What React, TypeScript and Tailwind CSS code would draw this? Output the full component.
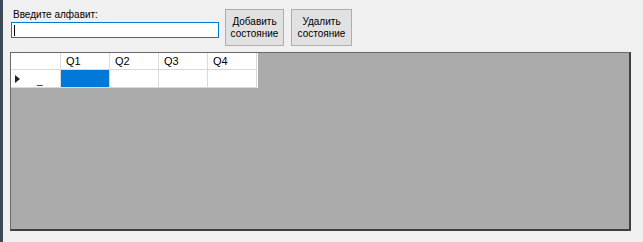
export default function App() {
  const cols = ["Q1", "Q2", "Q3", "Q4"];
  return (
    <div className="flex h-[242px] w-[643px] bg-[#f0f0f0] font-['Liberation_Sans',sans-serif] text-[10px] text-black">
      <div className="w-[3px] bg-[#3b4a58]" />
      <div className="flex flex-1 flex-col">
        <div className="flex h-[49px] items-start">
          <div className="ml-[8px] mt-[8px] flex flex-col">
            <span className="ml-[2px] leading-[13px]">Введите алфавит:</span>
            <div className="mt-[1px] flex h-[16px] w-[208px] items-center border border-[#0078d7] bg-white px-[2px]">
              <div className="h-[11px] w-px bg-black" />
            </div>
          </div>
          <button className="ml-[6px] mt-[9px] h-[37px] w-[59px] border border-[#adadad] bg-[#e1e1e1] text-[10px] leading-[12px]">
            Добавить
            <br />
            состояние
          </button>
          <button className="ml-[7px] mt-[9px] h-[37px] w-[61px] border border-[#adadad] bg-[#e1e1e1] text-[10px] leading-[12px]">
            Удалить
            <br />
            состояние
          </button>
        </div>
        <div className="ml-[7px] mt-[3px] h-[179px] w-[621px] border-l border-t border-[#696969] border-b-2 border-r-2 border-b-[#404040] border-r-[#404040] bg-[#ababab]">
          <div className="flex w-[247px] flex-col">
            <div className="flex h-[17px] bg-white">
              <div className="w-[50px] border-b border-r border-[#d9d9d9]" />
              {cols.map((c) => (
                <div
                  key={c}
                  className="flex w-[49px] items-center border-b border-r border-[#d9d9d9] pl-[5px] text-[11px]"
                >
                  {c}
                </div>
              ))}
            </div>
            <div className="flex h-[18px] bg-white">
              <div className="flex w-[50px] items-center border-b border-r border-[#d9d9d9] pl-[4px]">
                <svg width="5" height="8" viewBox="0 0 5 8">
                  <path d="M0 0 L5 4 L0 8 Z" fill="#222" />
                </svg>
                <span className="ml-[17px] mt-[4px]">_</span>
              </div>
              <div className="w-[49px] border-b border-r border-[#d9d9d9] bg-[#0078d7]" />
              <div className="w-[49px] border-b border-r border-[#d9d9d9]" />
              <div className="w-[49px] border-b border-r border-[#d9d9d9]" />
              <div className="w-[49px] border-b border-r border-[#d9d9d9]" />
            </div>
          </div>
        </div>
      </div>
    </div>
  );
}
